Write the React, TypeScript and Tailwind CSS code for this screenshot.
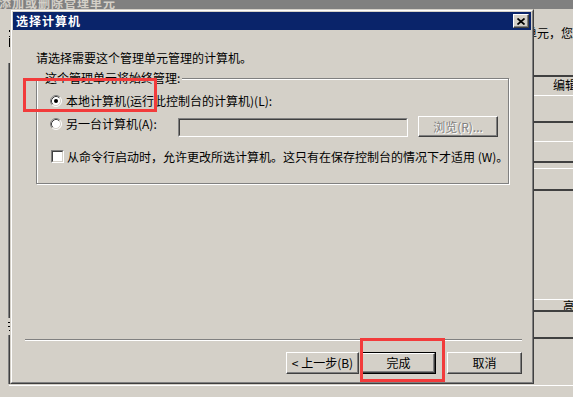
import type { ReactNode } from "react";

const raised =
  "border border-t-white border-l-white border-r-[#404040] border-b-[#404040] shadow-[inset_-1px_-1px_0_#808080]";
const sunken =
  "border border-t-[#808080] border-l-[#808080] border-r-white border-b-white";
const sunkenInner =
  "border border-t-[#404040] border-l-[#404040] border-r-[#d4d0c8] border-b-[#d4d0c8]";

const Radio = ({ checked }: { checked?: boolean }) => (
  <svg width="12" height="12" viewBox="0 0 12 12" className="shrink-0">
    <circle cx="6" cy="6" r="5" fill="#fff" />
    <path d="M2.11 9.89A5.5 5.5 0 0 1 9.89 2.11" fill="none" stroke="#808080" />
    <path d="M9.89 2.11A5.5 5.5 0 0 1 2.11 9.89" fill="none" stroke="#fff" />
    <path d="M2.82 9.18A4.5 4.5 0 0 1 9.18 2.82" fill="none" stroke="#404040" />
    <path d="M9.18 2.82A4.5 4.5 0 0 1 2.82 9.18" fill="none" stroke="#d4d0c8" />
    {checked && <circle cx="6" cy="6" r="2" fill="#000" />}
  </svg>
);

const Checkbox = () => (
  <div className={`h-[13px] w-[13px] shrink-0 ${sunken}`}>
    <div className={`h-full w-full bg-white ${sunkenInner}`} />
  </div>
);

const Button = ({
  children,
  className,
  focused,
  disabled,
}: {
  children: ReactNode;
  className: string;
  focused?: boolean;
  disabled?: boolean;
}) => {
  const face = (
    <div
      className={`flex h-full w-full items-center justify-center bg-[#d4d0c8] ${raised} ${
        disabled ? "text-[#808080] [text-shadow:1px_1px_0_#fff]" : ""
      }`}
    >
      {children}
    </div>
  );
  return (
    <div className={`shrink-0 ${className} ${focused ? "border border-black" : ""}`}>
      {face}
    </div>
  );
};

const ParentLeft = () => (
  <div className="flex w-[10px] shrink-0 flex-col items-end">
    <div className="mt-[21px] h-[2px] w-px bg-black" />
    <div className="mt-[4px] h-px w-px bg-black" />
    <div className="mt-px h-[9px] w-px bg-black" />
    <div className="mt-[16px] h-[255px] w-[2px] border-l border-[#808080] bg-[#404040]" />
    <div className="mt-[4px] h-px w-[2px] bg-black" />
    <div className="mt-[3px] h-px w-[2px] bg-black" />
    <div className="mt-[3px] h-px w-px bg-black" />
    <div className="mt-auto h-[49px] w-[2px] border-l border-[#808080] bg-[#404040]" />
  </div>
);

const ParentRight = () => (
  <div className="flex min-w-0 flex-1 flex-col overflow-hidden">
    <div className="mt-[18px] -ml-[9px] whitespace-nowrap">单元，您</div>
    <div className="mt-[36px] h-[2px] bg-[#404040]" />
    <div className="mt-[2px] ml-[19px] whitespace-nowrap">编辑扩展</div>
    <div className="mt-[4px] h-px bg-white" />
    <div className="mt-[25px] h-[2px] bg-[#404040]" />
    <div className="mt-[18px] h-px bg-white" />
    <div className="mt-[19px] h-[2px] bg-[#404040]" />
    <div className="mt-[5px] h-px bg-white" />
    <div className="mt-[20px] h-[2px] bg-[#404040]" />
    <div className="mt-[108px] h-px bg-white" />
    <div className="ml-[29px] whitespace-nowrap">高级</div>
    <div className="mt-[-2px] h-[2px] bg-[#404040]" />
    <div className="mt-[25px] h-[2px] bg-[#404040]" />
  </div>
);

const Dialog = () => (
  <div className="flex w-[524px] shrink-0 flex-col border border-t-[#d4d0c8] border-l-[#d4d0c8] border-r-[#404040] border-b-[#404040]">
    <div className="flex flex-1 flex-col border border-t-white border-l-white border-r-[#808080] border-b-[#808080] p-px">
      <div className="flex h-[18px] shrink-0 items-center justify-between bg-[#0a246a] pl-[3px] pr-[2px]">
        <span className="font-bold tracking-[1px] text-white">选择计算机</span>
        <div className={`flex h-[14px] w-[16px] items-center justify-center bg-[#d4d0c8] ${raised}`}>
          <svg width="8" height="7" viewBox="0 0 8 7">
            <path d="M0.5 0.5L7.5 6.5M7.5 0.5L0.5 6.5" stroke="#000" strokeWidth="1.7" />
          </svg>
        </div>
      </div>

      <div className="flex flex-1 flex-col">
        <div className="mt-[22px] ml-[23px]">请选择需要这个管理单元管理的计算机。</div>

        <div className="mt-[14px] ml-[23px] flex h-[106px] w-[473px] flex-col border border-[#808080] shadow-[inset_1px_1px_0_#fff,1px_1px_0_#fff]">
          <div className="-mt-[7px] ml-[6px] self-start bg-[#d4d0c8] px-[2px]">这个管理单元将始终管理:</div>

          <div className="mt-[11px] ml-[13px] flex h-[12px] items-center gap-[4px]">
            <Radio checked />
            <span className="whitespace-nowrap">本地计算机(运行此控制台的计算机)(L):</span>
          </div>

          <div className="mt-[9px] ml-[13px] flex items-start">
            <div className="mt-[2px] flex w-[128px] items-center gap-[4px]">
              <Radio />
              <span className="whitespace-nowrap">另一台计算机(A):</span>
            </div>
            <div className={`mt-[2px] h-[19px] w-[230px] ${sunken}`}>
              <div className={`h-full w-full bg-[#d4d0c8] ${sunkenInner}`} />
            </div>
            <Button className="ml-[10px] h-[21px] w-[80px]" disabled>
              浏览(R)...
            </Button>
          </div>

          <div className="mt-[13px] ml-[14px] flex items-center gap-[3px]">
            <Checkbox />
            <span className="whitespace-nowrap">
              从命令行启动时，允许更改所选计算机。这只有在保存控制台的情况下才适用 (W)。
            </span>
          </div>
        </div>

        <div className="mt-auto mr-[9px] ml-[12px] h-[2px] border-t border-b border-t-[#808080] border-b-white" />

        <div className="mt-[11px] mr-[9px] mb-[7px] flex justify-end">
          <Button className="h-[22px] w-[73px]">&lt; 上一步(B)</Button>
          <Button className="ml-[2px] h-[22px] w-[75px]" focused>
            完成
          </Button>
          <Button className="ml-[11px] h-[22px] w-[75px]">取消</Button>
        </div>
      </div>
    </div>
  </div>
);

export default function App() {
  return (
    <div className="relative flex h-[397px] w-[573px] flex-col overflow-hidden bg-[#d4d0c8] text-[12px] leading-[12px] text-black [font-family:'Noto_Sans_CJK_SC','Liberation_Sans',sans-serif]">
      <div className="h-[9px] shrink-0 overflow-hidden bg-[#808080]">
        <div className="-mt-[3px] -ml-px whitespace-nowrap font-bold tracking-[1px] text-[#d4d0c8]">
          添加或删除管理单元
        </div>
      </div>

      <div className="flex h-[375px] shrink-0">
        <ParentLeft />
        <Dialog />
        <ParentRight />
      </div>

      <div className="mt-px ml-[9px] h-px bg-white" />

      <div className="absolute top-[78px] left-[23px] h-[34px] w-[134px] border-[3px] border-[#f23b3b]" />
      <div className="absolute top-[338px] left-[360px] h-[44px] w-[85px] border-[3px] border-[#f23b3b]" />
    </div>
  );
}
